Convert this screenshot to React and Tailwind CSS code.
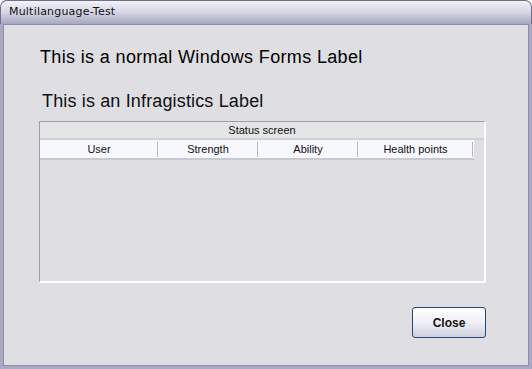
export default function App() {
  const cols = [
    { label: 'User', w: 'w-[118px]' },
    { label: 'Strength', w: 'w-[100px]' },
    { label: 'Ability', w: 'w-[100px]' },
    { label: 'Health points', w: 'w-[115px]' },
  ];

  return (
    <div className="w-[532px] h-[369px] bg-[#6f6f8a] rounded-t-[7px] flex flex-col overflow-hidden" style={{ fontFamily: '"Liberation Sans", Arial, sans-serif' }}>
      {/* title bar */}
      <div className="h-[23px] mx-[1px] mt-[1px] rounded-t-[6px] bg-gradient-to-b from-[#f2f2f8] via-[#d4d4e4] to-[#a7a7c2] flex items-center pl-[8px] shrink-0">
        <span className="text-[11px] text-[#111] tracking-[0.2px]" style={{ fontFamily: '"DejaVu Sans", sans-serif' }}>Multilanguage-Test</span>
      </div>
      {/* frame */}
      <div className="flex-1 flex flex-col bg-[#a9a9c4] px-[3px] pb-[3px]">
        <div className="flex-1 bg-[#dfdee3] border border-[#8d8da8] flex flex-col">
          <div className="pl-[36px] pt-[21px] text-[18px] tracking-[0.35px] text-black leading-[22px]">This is a normal Windows Forms Label</div>
          <div className="pl-[38px] pt-[22px] text-[18px] tracking-[0.15px] text-[#111] leading-[22px]">This is an Infragistics Label</div>
          <div className="ml-[35px] mt-[9px] w-[447px] h-[162px] border-t border-l border-[#a0a0a0] border-b-2 border-r-2 border-b-white border-r-white flex flex-col">
            <div className="h-[18px] bg-[#e3e5e6] border-b-2 border-[#d0d0d8] flex items-center justify-center text-[11px] text-[#111]">Status screen</div>
            <div className="flex h-[20px] w-[434px] bg-[#f7f8fd] border-b-2 border-[#c8c8d2]">
              {cols.map((c) => (
                <div key={c.label} className={`${c.w} flex items-center justify-center text-[11px] text-[#111] relative`}>
                  {c.label}
                  <span className="absolute right-0 top-[2px] bottom-[1px] w-[1px] bg-[#b8b8c0]" />
                </div>
              ))}
            </div>
          </div>
          <div className="flex justify-end pr-[42px] mt-[24px]">
            <button className="w-[74px] h-[31px] rounded-[3px] border border-[#1d4c7a] bg-gradient-to-b from-[#ffffff] via-[#f0f0f6] to-[#cfcfe0] text-[12px] font-bold text-[#111]">Close</button>
          </div>
        </div>
      </div>
    </div>
  );
}
